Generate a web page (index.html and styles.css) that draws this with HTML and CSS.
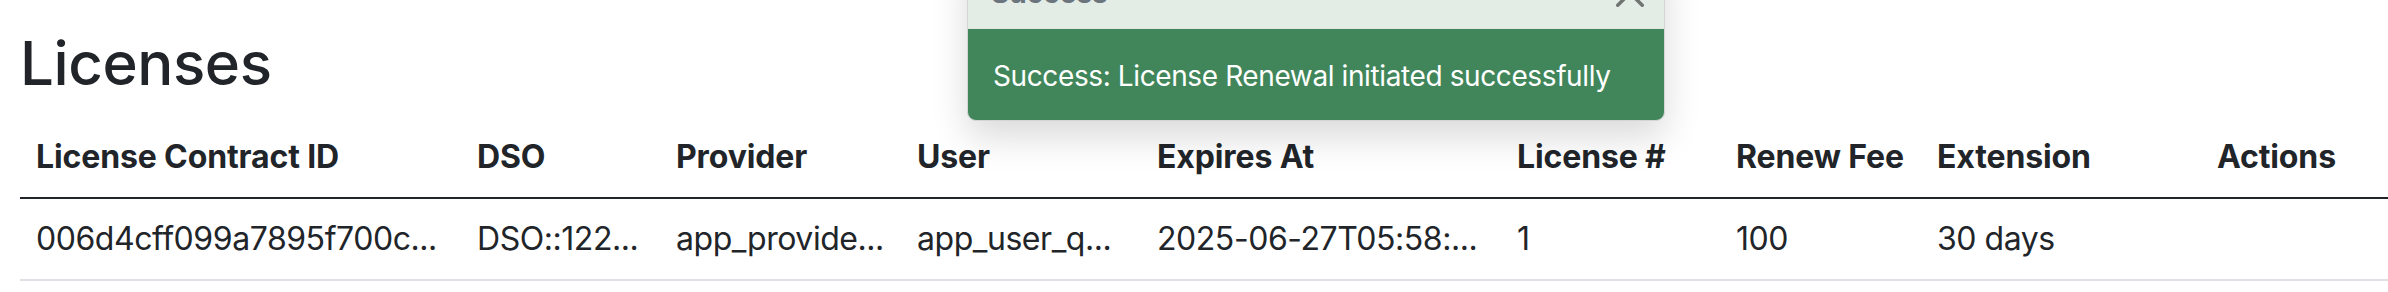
FILE: index.html
```html
<!DOCTYPE html>
<html lang="en">
<head>
<meta charset="utf-8">
<title>Licenses</title>
<link rel="stylesheet" href="styles.css">
</head>
<body>
<main class="page">
  <h1 class="title">Licenses</h1>
  <table class="table">
    <colgroup>
      <col class="c-id"><col class="c-dso"><col class="c-prov"><col class="c-user"><col class="c-exp"><col class="c-num"><col class="c-fee"><col class="c-ext"><col class="c-act">
    </colgroup>
    <thead>
      <tr>
        <th>License Contract ID</th>
        <th>DSO</th>
        <th>Provider</th>
        <th>User</th>
        <th>Expires At</th>
        <th>License #</th>
        <th>Renew Fee</th>
        <th>Extension</th>
        <th>Actions</th>
      </tr>
    </thead>
    <tbody>
      <tr>
        <td>006d4cff099a7895f700c...</td>
        <td>DSO::122...</td>
        <td>app_provide...</td>
        <td>app_user_q...</td>
        <td>2025-06-27T05:58:...</td>
        <td>1</td>
        <td>100</td>
        <td>30 days</td>
        <td></td>
      </tr>
    </tbody>
  </table>
</main>
<div class="toast" role="alert">
  <div class="toast-header">
    <strong class="toast-title">Success</strong>
    <button class="btn-close" aria-label="Close">
      <svg viewBox="0 0 16 16" width="28" height="28"><path d="M.293.293a1 1 0 0 1 1.414 0L8 6.586 14.293.293a1 1 0 1 1 1.414 1.414L9.414 8l6.293 6.293a1 1 0 0 1-1.414 1.414L8 9.414l-6.293 6.293a1 1 0 0 1-1.414-1.414L6.586 8 .293 1.707a1 1 0 0 1 0-1.414z"/></svg>
    </button>
  </div>
  <div class="toast-body">Success: License Renewal initiated successfully</div>
</div>
</body>
</html>
```
FILE: styles.css
```css
html, body {
  margin: 0;
  padding: 0;
  background: #fff;
  overflow: hidden;
}
body {
  font-family: Inter, "Noto Sans", "Liberation Sans", sans-serif;
  color: #212529;
  font-size: 32px;
  line-height: 1.5;
}
.page {
  padding: 27px 0 0 20px;
}
.title {
  margin: 0 0 18px 0;
  font-size: 60px;
  line-height: 72px;
  font-weight: 500;
  letter-spacing: -0.007em;
}
.table {
  border-collapse: collapse;
  table-layout: fixed;
  width: 2368px;
}
.c-id { width: 441px; }
.c-dso { width: 199px; }
.c-prov { width: 241px; }
.c-user { width: 240px; }
.c-exp { width: 360px; }
.c-num { width: 219px; }
.c-fee { width: 201px; }
.c-ext { width: 280px; }
.c-act { width: 187px; }
.table th,
.table td {
  padding: 16px;
  text-align: left;
  white-space: nowrap;
  overflow: hidden;
  line-height: 48px;
}
.table th {
  font-weight: 700;
  letter-spacing: -0.004em;
  border-bottom: 2px solid #212529;
}
.table td {
  font-weight: 400;
  letter-spacing: -0.014em;
  border-bottom: 2px solid #dee2e6;
}
.toast {
  position: absolute;
  top: -47px;
  left: 967px;
  width: 698px;
  box-sizing: border-box;
  border: 1px solid #d3d6d4;
  border-radius: 9px;
  overflow: hidden;
  background: #40865a;
  box-shadow: 0 16px 36px rgba(0, 0, 0, 0.15);
  font-size: 28px;
  line-height: 42px;
}
.toast-header {
  display: flex;
  align-items: center;
  justify-content: space-between;
  padding: 18px 20px 14px 23px;
  background: #e3ece5;
  color: #6c757d;
  border-bottom: 1px solid #dfe5e1;
}
.toast-title {
  font-weight: 700;
}
.btn-close {
  display: flex;
  padding: 0;
  margin: 0;
  border: 0;
  background: transparent;
  opacity: 0.5;
  fill: #000;
}
.toast-body {
  padding: 26px 24px 23px 25px;
  color: #fff;
  letter-spacing: -0.014em;
}
```
